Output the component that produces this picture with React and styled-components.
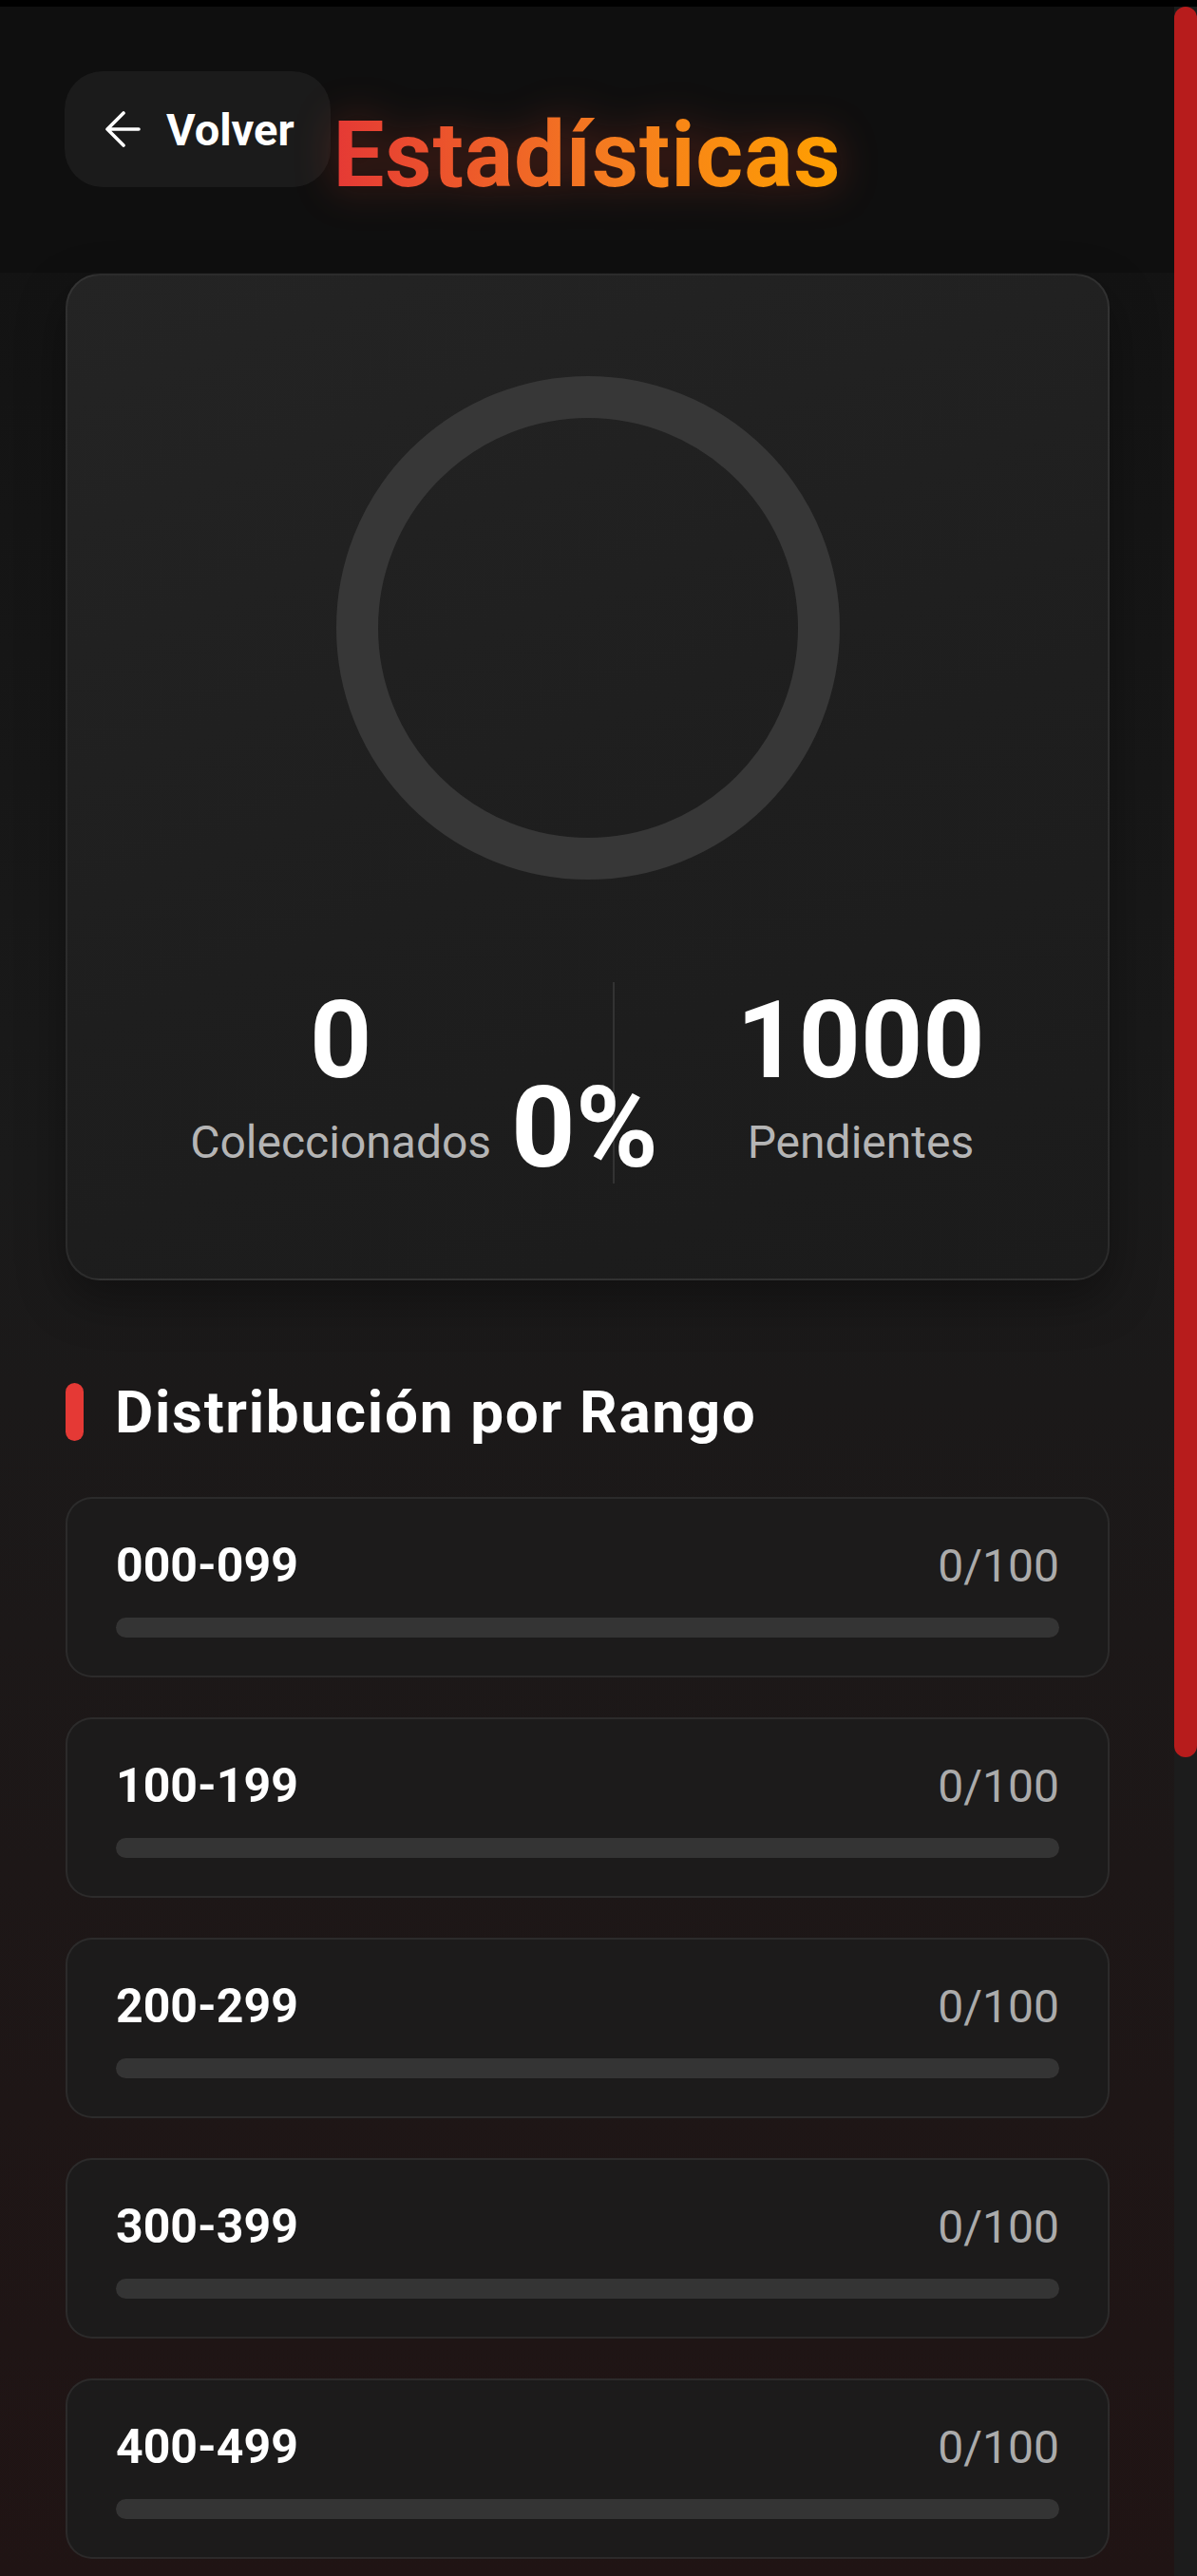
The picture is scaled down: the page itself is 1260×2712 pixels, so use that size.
import styled, { createGlobalStyle } from "styled-components";

const GlobalStyle = createGlobalStyle`
  html, body {
    margin: 0;
    padding: 0;
    background: #000;
  }
  body {
    font-family: Roboto, "Noto Sans", sans-serif;
    color: #fff;
  }
  * {
    box-sizing: border-box;
  }
`;

const Screen = styled.div`
  height: 2712px;
  overflow: hidden;
  display: flex;
  flex-direction: column;
  background: #000;
`;

const StatusStrip = styled.div`
  height: 7px;
  flex-shrink: 0;
  background: #000;
`;

const Viewport = styled.div`
  flex: 1;
  display: flex;
  min-height: 0;
`;

const Page = styled.main`
  flex: 1;
  min-width: 0;
  overflow: hidden;
  background: linear-gradient(180deg, #111111 0%, #1a1a1a 45%, #201414 100%);
`;

const ScrollRail = styled.div`
  width: 24px;
  flex-shrink: 0;
  background: #1c1c1c;
`;

const ScrollThumb = styled.div`
  height: 1843px;
  border-radius: 12px;
  background: #b71c1c;
`;

const Header = styled.header`
  display: grid;
  grid-template-columns: 1fr auto 1fr;
  align-items: start;
  padding: 68px 68px;
  background: #0f0f0f;
`;

const BackButton = styled.button`
  justify-self: start;
  display: flex;
  align-items: center;
  gap: 27px;
  height: 122px;
  padding: 0 38px 0 42px;
  border: none;
  border-radius: 40px;
  background: #1b1b1b;
  color: #fff;
  font-family: Roboto, sans-serif;
  font-size: 47px;
  font-weight: 700;
  cursor: pointer;

  svg {
    flex-shrink: 0;
  }
`;

const Title = styled.h1`
  margin: 32px 0 0;
  font-size: 96px;
  font-weight: 700;
  line-height: normal;
  letter-spacing: 0.8px;
  background: linear-gradient(90deg, #e53935 0%, #f57c1f 55%, #ffa000 100%);
  -webkit-background-clip: text;
  background-clip: text;
  -webkit-text-fill-color: transparent;
  filter: drop-shadow(0 0 22px rgba(229, 70, 40, 0.35));
`;

const Content = styled.div`
  display: flex;
  flex-direction: column;
  padding: 1px 68px 0 69px;
`;

const SummaryCard = styled.section`
  display: flex;
  flex-direction: column;
  align-items: center;
  gap: 108px;
  padding: 106px 0 100px;
  border: 2px solid rgba(255, 255, 255, 0.07);
  border-radius: 36px;
  background: linear-gradient(160deg, #242424 0%, #1e1e1e 55%, #1b1b1b 100%);
  box-shadow: 0 20px 50px rgba(0, 0, 0, 0.35);
`;

const Ring = styled.svg`
  display: block;
`;

const StatsRow = styled.div`
  position: relative;
  display: flex;
  align-items: center;
  gap: 128px;
`;

const Stat = styled.div`
  display: flex;
  flex-direction: column;
  align-items: center;
  gap: 22px;
  margin-bottom: 10px;
`;

const StatValue = styled.span`
  font-size: 114px;
  font-weight: 700;
  line-height: 1;
  color: #fff;
`;

const StatLabel = styled.span`
  font-size: 48px;
  font-weight: 400;
  line-height: 1.2;
  color: #b5b5b5;
`;

const Divider = styled.div`
  width: 2px;
  height: 212px;
  background: #333;
`;

const Percent = styled.span`
  position: absolute;
  top: 95px;
  left: 50%;
  transform: translateX(-52%);
  font-size: 118px;
  font-weight: 700;
  line-height: 1;
  color: #fff;
`;

const SectionHeading = styled.h2`
  display: flex;
  align-items: center;
  gap: 33px;
  margin: 102px 0 53px;
  font-size: 62px;
  font-weight: 700;
  line-height: normal;
  letter-spacing: 1.7px;
  color: #fff;
`;

const Accent = styled.span`
  width: 19px;
  height: 61px;
  border-radius: 10px;
  background: #e53935;
`;

const RangeList = styled.div`
  display: flex;
  flex-direction: column;
  gap: 42px;
`;

const RangeCard = styled.div`
  display: flex;
  flex-direction: column;
  gap: 26px;
  padding: 42px 51px 40px;
  border: 2px solid rgba(255, 255, 255, 0.07);
  border-radius: 28px;
  background: rgba(28, 28, 28, 0.85);
`;

const RangeTop = styled.div`
  display: flex;
  justify-content: space-between;
  align-items: baseline;
  line-height: 57px;
`;

const RangeLabel = styled.span`
  font-size: 50px;
  font-weight: 700;
  color: #fff;
`;

const RangeCount = styled.span`
  font-size: 48px;
  font-weight: 400;
  color: #ababab;
`;

const Track = styled.div`
  height: 21px;
  border-radius: 11px;
  background: rgba(255, 255, 255, 0.11);
  overflow: hidden;
`;

const Fill = styled.div`
  height: 100%;
  border-radius: 11px;
  background: linear-gradient(90deg, #e53935, #ffa000);
`;

const pad = (n) => String(n).padStart(3, "0");

const ranges = Array.from({ length: 10 }, (_, i) => ({
  label: `${pad(i * 100)}-${pad(i * 100 + 99)}`,
  owned: 0,
  total: 100,
}));

function ArrowLeft() {
  return (
    <svg width="38" height="38" viewBox="0 0 38 38" fill="none">
      <path
        d="M36 19H3M20 2L3 19l17 17"
        stroke="#fff"
        strokeWidth="3.6"
        strokeLinecap="round"
        strokeLinejoin="round"
      />
    </svg>
  );
}

export default function App() {
  const collected = 0;
  const total = 1000;
  const percent = Math.round((collected / total) * 100);

  return (
    <>
      <GlobalStyle />
      <Screen>
        <StatusStrip />
        <Viewport>
          <Page>
            <Header>
              <BackButton>
                <ArrowLeft />
                Volver
              </BackButton>
              <Title>Estadísticas</Title>
            </Header>

            <Content>
              <SummaryCard>
                <Ring width="530" height="530" viewBox="0 0 530 530">
                  <circle cx="265" cy="265" r="243" fill="none" stroke="#373737" strokeWidth="44" />
                </Ring>
                <StatsRow>
                  <Stat>
                    <StatValue>{collected}</StatValue>
                    <StatLabel>Coleccionados</StatLabel>
                  </Stat>
                  <Divider />
                  <Stat>
                    <StatValue>{total - collected}</StatValue>
                    <StatLabel>Pendientes</StatLabel>
                  </Stat>
                  <Percent>{percent}%</Percent>
                </StatsRow>
              </SummaryCard>

              <SectionHeading>
                <Accent />
                Distribución por Rango
              </SectionHeading>

              <RangeList>
                {ranges.map((r) => (
                  <RangeCard key={r.label}>
                    <RangeTop>
                      <RangeLabel>{r.label}</RangeLabel>
                      <RangeCount>
                        {r.owned}/{r.total}
                      </RangeCount>
                    </RangeTop>
                    <Track>
                      <Fill style={{ width: `${(r.owned / r.total) * 100}%` }} />
                    </Track>
                  </RangeCard>
                ))}
              </RangeList>
            </Content>
          </Page>
          <ScrollRail>
            <ScrollThumb />
          </ScrollRail>
        </Viewport>
      </Screen>
    </>
  );
}
